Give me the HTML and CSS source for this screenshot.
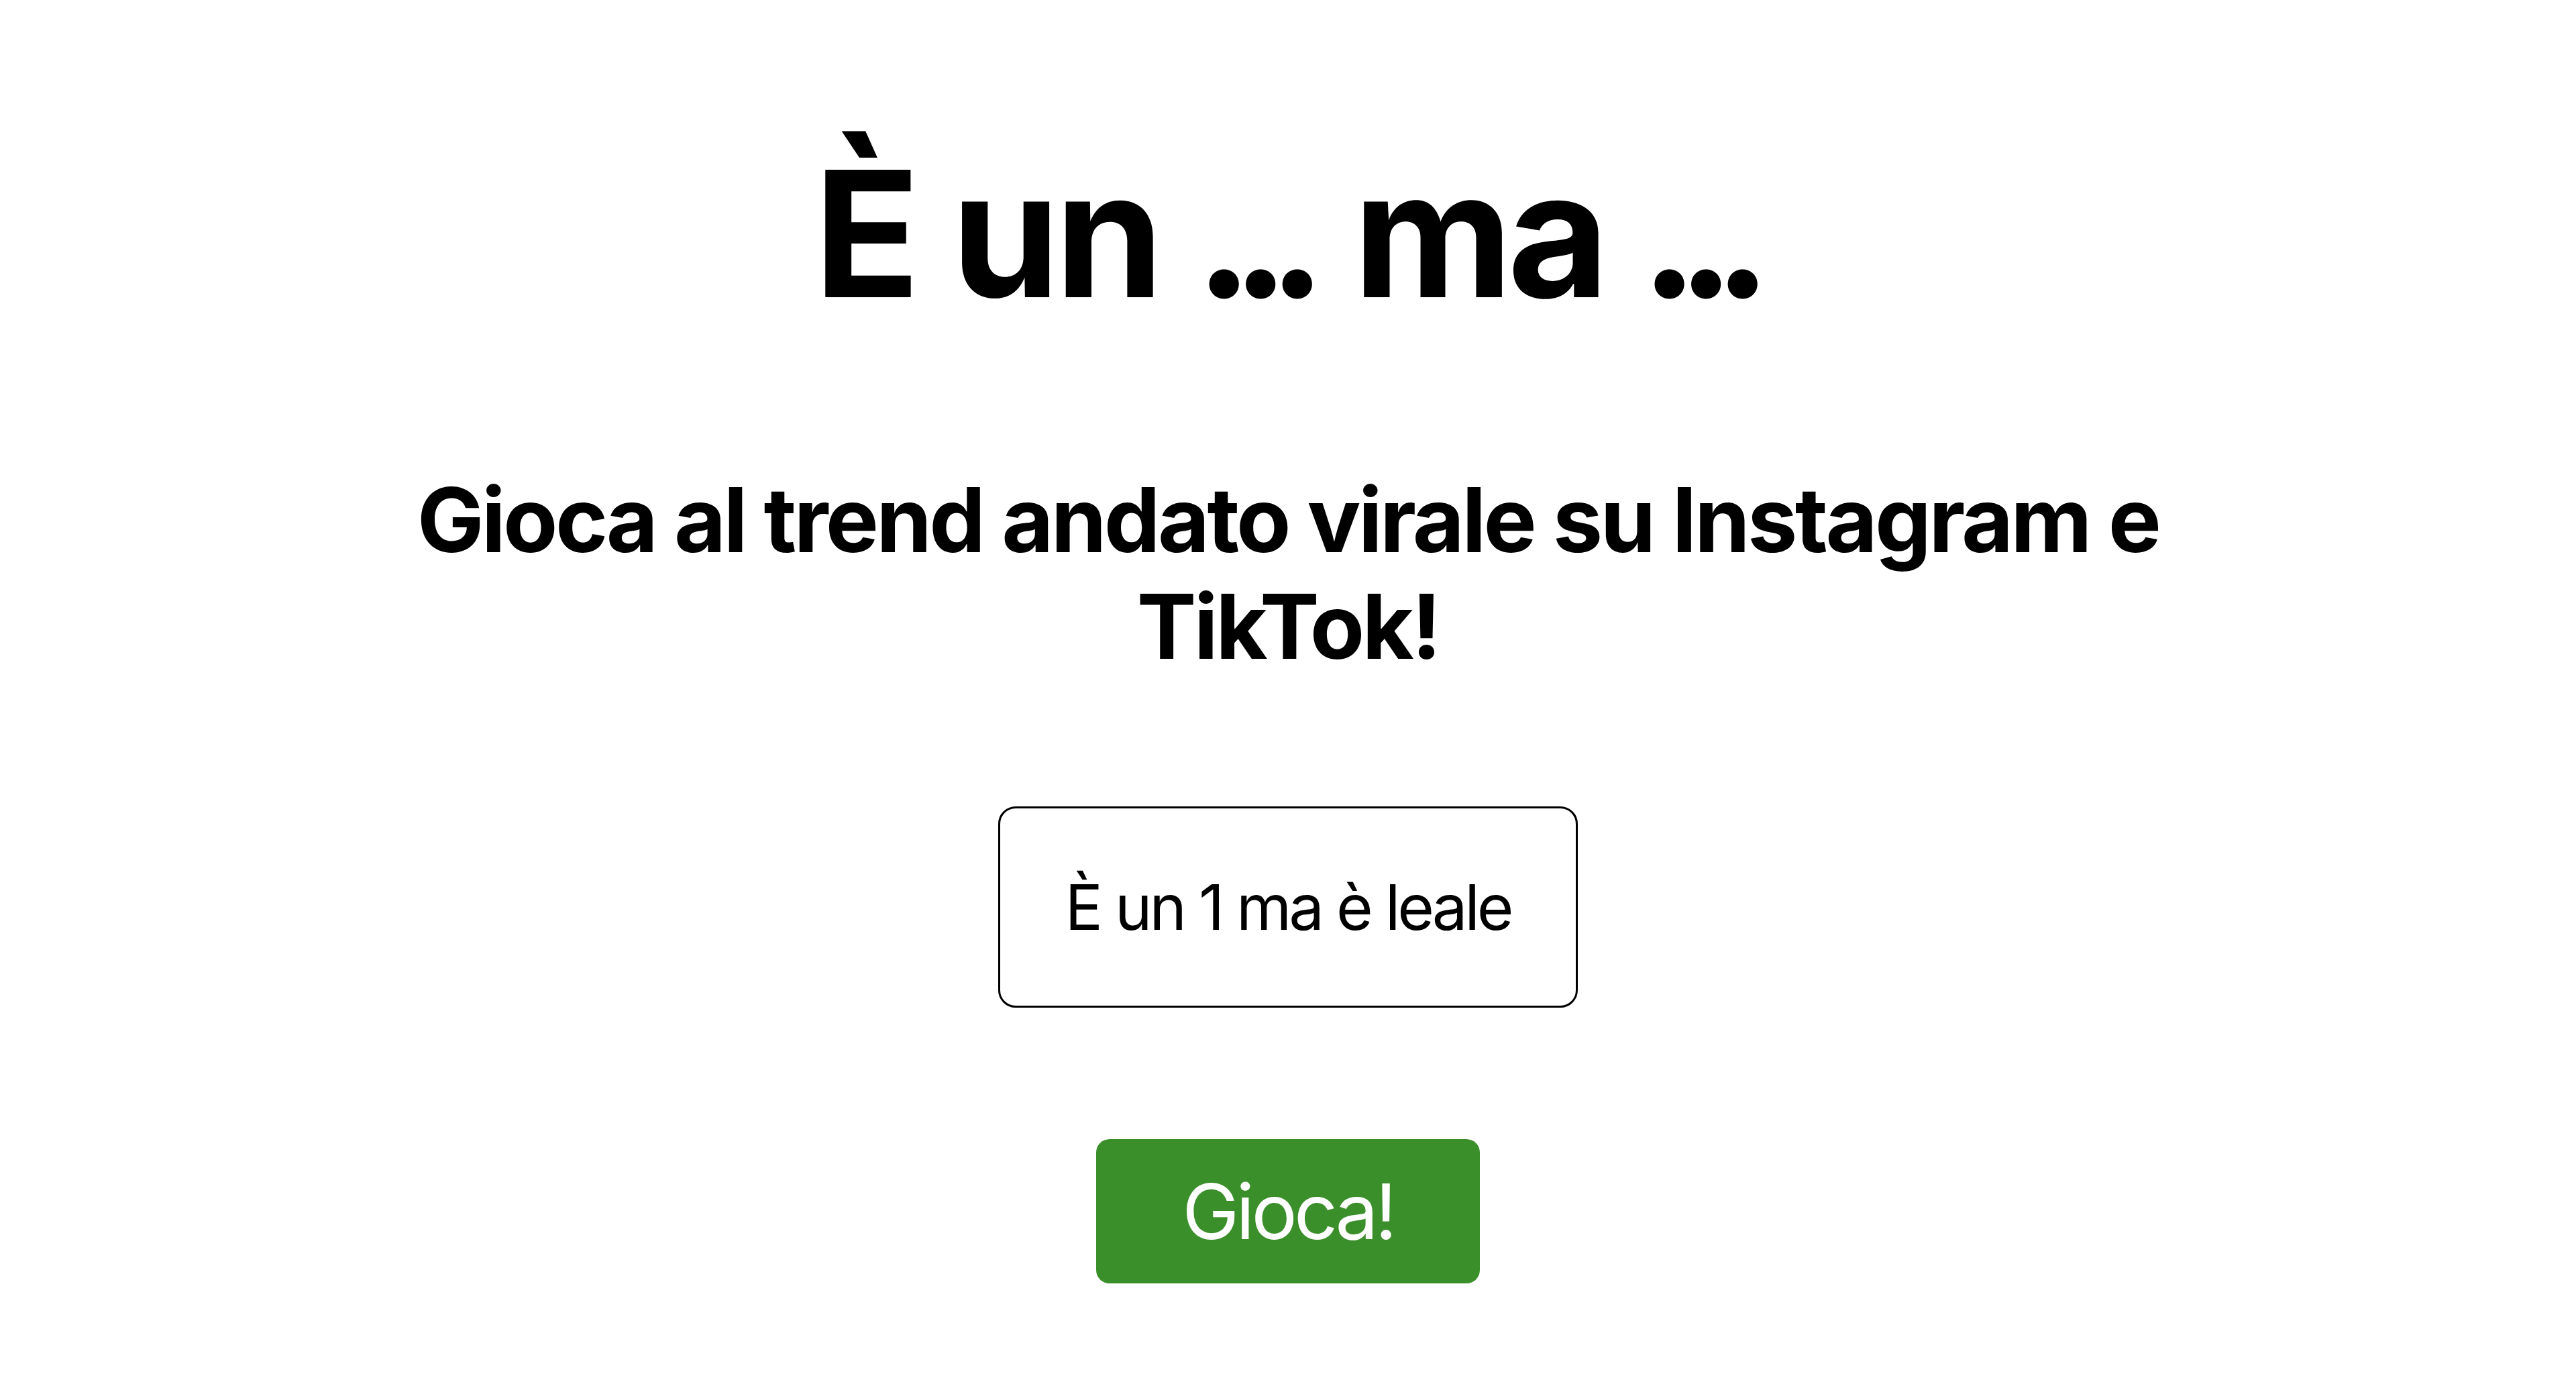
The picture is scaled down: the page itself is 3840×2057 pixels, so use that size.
FILE: index.html
```html
<!DOCTYPE html>
<html lang="it">
<head>
<meta charset="utf-8">
<title>È un ... ma ...</title>
<link rel="stylesheet" href="styles.css">
</head>
<body>
<main class="page">
  <h1 class="title">È un <span class="dots">...</span> ma <span class="dots">...</span></h1>
  <h2 class="subtitle">Gioca al trend andato virale su Instagram e TikTok!</h2>
  <div class="card">È un 1 ma è leale</div>
  <button class="play">Gioca!</button>
</main>
</body>
</html>
```

FILE: styles.css
```css
html, body {
  margin: 0;
  padding: 0;
  background: #ffffff;
}
body {
  font-family: Inter, "Noto Sans", sans-serif;
  color: #000000;
}
.page {
  display: flex;
  flex-direction: column;
  align-items: center;
  padding-top: 192px;
}
.title {
  margin: 0;
  font-size: 261px;
  line-height: 313px;
  font-weight: 700;
  letter-spacing: -0.03em;
}
.dots {
  letter-spacing: -0.125em;
  margin-right: 0.07em;
}
.subtitle {
  margin: 190px 0 0 0;
  max-width: 2700px;
  text-align: center;
  font-size: 133px;
  line-height: 159px;
  font-weight: 700;
  letter-spacing: -0.028em;
}
.card {
  margin-top: 189px;
  box-sizing: border-box;
  width: 864px;
  height: 300px;
  border: 3px solid #000000;
  border-radius: 26px;
  display: flex;
  align-items: center;
  justify-content: center;
  font-size: 94px;
  font-weight: 400;
  letter-spacing: -0.045em;
}
.play {
  margin-top: 196px;
  width: 572px;
  height: 215px;
  border: none;
  border-radius: 20px;
  background: #3b8f2a;
  color: #ffffff;
  font-family: Inter, "Noto Sans", sans-serif;
  font-size: 114px;
  font-weight: 400;
  letter-spacing: -0.042em;
  padding: 0;
}
```
